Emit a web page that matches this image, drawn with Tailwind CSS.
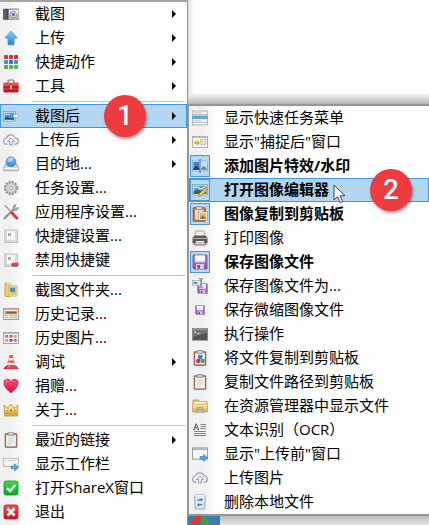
<!DOCTYPE html>
<html lang="zh-CN">
<head>
<meta charset="utf-8">
<meta name="viewport" content="width=device-width, initial-scale=1">
<title>ShareX</title>
<script src="https://cdn.jsdelivr.net/npm/@tailwindcss/browser@4"></script>
</head>
<body class="min-h-screen overflow-hidden bg-white font-['Open_Sans','Noto_Sans_CJK_SC',sans-serif] text-[15px] leading-6 text-black">
<svg class="absolute size-0" aria-hidden="true">
  <defs>
    <linearGradient id="gBlue" x2="0" y2="1"><stop stop-color="#8fd0f8"/><stop offset="1" stop-color="#2384d8"/></linearGradient>
    <linearGradient id="gGrey" x2="0" y2="1"><stop stop-color="#f4f4f4"/><stop offset="1" stop-color="#b4b4b8"/></linearGradient>
    <linearGradient id="gGold" x2="0" y2="1"><stop stop-color="#fbe9a6"/><stop offset="1" stop-color="#dfae4c"/></linearGradient>
    <linearGradient id="gRed" x2="0" y2="1"><stop stop-color="#ef5a5a"/><stop offset="1" stop-color="#c01420"/></linearGradient>
    <linearGradient id="gGreen" x2="0" y2="1"><stop stop-color="#3fdc50"/><stop offset="1" stop-color="#08a828"/></linearGradient>
    <linearGradient id="gPurple" x2="0" y2="1"><stop stop-color="#b684d4"/><stop offset="1" stop-color="#8a50b0"/></linearGradient>
    <linearGradient id="gHeart" x2="0" y2="1"><stop stop-color="#ff5478"/><stop offset="1" stop-color="#d00c3c"/></linearGradient>
    <symbol id="camera" viewBox="0 0 16 16"><rect y="2.5" width="16" height="11.5" rx="1" fill="#9c9ca0"/><rect x=".3" y="3" width="5" height="10.6" fill="#4a4a4c"/><path d="M1.5 4v9M3 4v9" stroke="#777" stroke-width=".6"/><path d="M6 4h9.5v9H6z" fill="url(#gGrey)"/><circle cx="10.3" cy="8.6" r="3.3" fill="#d8d8e4" stroke="#888892" stroke-width=".8"/><circle cx="10.3" cy="8.6" r="1.6" fill="#6a6aa0"/><path d="M13.7 5v2" stroke="#fff"/></symbol>
    <symbol id="up" viewBox="0 0 16 16"><path d="M8 1.2 14.2 8H11v6.8H5V8H1.8z" fill="url(#gBlue)" stroke="#3d94d8" stroke-width=".8"/></symbol>
    <symbol id="dots" viewBox="0 0 16 16"><g fill="#e02c38"><rect x="1" y="1" width="4" height="4" rx="1"/><rect x="6" y="1" width="4" height="4" rx="1"/><rect x="11" y="1" width="4" height="4" rx="1"/></g><g fill="#3c8fdc"><rect x="1" y="6" width="4" height="4" rx="1"/><rect x="11" y="6" width="4" height="4" rx="1"/></g><rect x="6" y="6" width="4" height="4" rx="1" fill="#2878cc"/><g fill="#48b838"><rect x="1" y="11" width="4" height="4" rx="1"/><rect x="6" y="11" width="4" height="4" rx="1"/><rect x="11" y="11" width="4" height="4" rx="1"/></g></symbol>
    <symbol id="tools" viewBox="0 0 16 16"><path d="M5 5V3.2Q5 2 6.2 2h3.6Q11 2 11 3.2V5" fill="none" stroke="#777" stroke-width="1.2"/><rect x=".3" y="4.5" width="15.4" height="9.7" rx="1" fill="url(#gRed)"/><path d="M.3 9h15.4" stroke="#8a0c14"/><rect x="7" y="7.6" width="2" height="3.2" fill="#ddd"/><path d="M1 13.8h14" stroke="#7c1016" stroke-width=".7"/></symbol>
    <symbol id="imgnext" viewBox="0 0 16 16"><rect x=".5" y="3.5" width="11.5" height="9.5" fill="#f4f8fc" stroke="#8298ac" stroke-width=".8"/><rect x="1.6" y="4.6" width="9.4" height="7.2" fill="#4b98dc"/><path d="M1.6 11.8V9.5l3-1 3 1.4 3.4-1v2.9z" fill="#285c84"/><path d="M2 6.3h5" stroke="#bfe2fa"/><path d="M10 6.7h2.5V4.8l3 3.2-3 3.2V9.4H10z" fill="#fafcff" stroke="#74889c" stroke-width=".6"/></symbol>
    <symbol id="cloud" viewBox="0 0 16 16"><path d="M4.5 12.2H3.8A3.1 3.1 0 0 1 3.4 6 4.6 4.6 0 0 1 12 5.8a3.2 3.2 0 0 1 .3 6.4h-.8" fill="#f3f3f7" stroke="#a2a2b2" stroke-width="1.2"/><path d="m8 6 3.4 3.5H9.3V13H6.7V9.5H4.6z" fill="#f6f6fa" stroke="#9494a6" stroke-width=".9"/></symbol>
    <symbol id="globe" viewBox="0 0 16 16"><path d="M2.5 8h11l2.2 4.5v2.2H.3v-2.2z" fill="#d8d8dc" stroke="#94949a" stroke-width=".7"/><circle cx="8" cy="5.8" r="5" fill="url(#gBlue)" stroke="#3578b4" stroke-width=".6"/><path d="M4.5 4q3-3 6-1.4L9 5.5 6 6z" fill="#c4e8fc" opacity=".7"/><path d="M1 12.4h14" stroke="#fff"/></symbol>
    <symbol id="gear" viewBox="0 0 16 16"><circle cx="8" cy="8" r="6.2" fill="none" stroke="#98989c" stroke-width="2" stroke-dasharray="2.2 1.05"/><circle cx="8" cy="8" r="5.4" fill="#c4c4c8" stroke="#98989c" stroke-width=".6"/><circle cx="8" cy="8" r="3.2" fill="none" stroke="#e8e8ea"/><circle cx="8" cy="8" r="1.6" fill="#fff" stroke="#888" stroke-width=".7"/></symbol>
    <symbol id="wrench" viewBox="0 0 16 16"><path d="M1.500 14.200 11 5" stroke="#909094" stroke-width="2.200" stroke-linecap="round"/><path d="M10 2.200a3.600 3.600 0 0 1 3-1.400L11.800 3l.9 1.300 2.800-.8a3.600 3.600 0 0 1-5 3z" fill="#b0b0b4" stroke="#808084" stroke-width=".6"/><path d="m1.200 1.300 1.300-.4 6 6.300-.8.9-6.200-6z" fill="#98989c"/><path d="m9 9 4.800 5" stroke="#e2343c" stroke-width="3" stroke-linecap="round"/></symbol>
    <symbol id="key" viewBox="0 0 16 16"><rect x="1" y="1.5" width="14" height="13.5" rx="1" fill="#bcbcc0"/><rect x="1.5" y="2" width="12.8" height="12" rx="1" fill="#dcdce0"/><rect x="3.5" y="3" width="9" height="9" rx="1" fill="#fbfbfb" stroke="#c8c8cc" stroke-width=".5"/><path d="M5.5 8V5.5h2V8M5.5 7h2" fill="none" stroke="#888" stroke-width=".8"/></symbol>
    <symbol id="keyoff" viewBox="0 0 16 16"><use href="#key"/><rect x="8.5" y="10.8" width="7" height="3.6" rx="1.4" fill="#d42834"/><path d="M9.8 12h4.4" stroke="#f08088" stroke-width=".7"/></symbol>
    <symbol id="folder" viewBox="0 0 16 16"><path d="M2 1.2h5.5v13H2z" fill="url(#gGold)" stroke="#c89c48" stroke-width=".6"/><path d="M5 4h9v10H5z" fill="#f8f2cc" stroke="#c49c4c" stroke-width=".7"/><rect x="7" y="5.5" width="5.5" height="7" fill="#5888c0"/><path d="M7 10h5.5v2.5H7z" fill="#e8cc54"/><path d="m2 1.2 4 3v11l-4-1.6z" fill="#f0ce78" stroke="#c89c48" stroke-width=".6"/></symbol>
    <symbol id="history" viewBox="0 0 16 16"><rect x=".5" y="2.5" width="15" height="11" fill="#ececee" stroke="#88888c" stroke-width=".8"/><path d="M1 3.4h14" stroke="#b8b8bc"/><rect x="2" y="5" width="12" height="3.3" fill="#d8882c"/><path d="M4 6.6h9" stroke="#8e4c10" stroke-width=".9"/><path d="M2 9.7h3M6.5 9.7H14M2 11.5h3M6.5 11.5H14" stroke="#b4b4b8" stroke-width=".9"/></symbol>
    <symbol id="gallery" viewBox="0 0 16 16"><rect x=".5" y="2.5" width="15" height="11" fill="#f4f4f6" stroke="#929296" stroke-width=".8"/><path d="M1 3.4h14" stroke="#b8b8bc"/><path d="M2.2 5h3v2.7h-3z" fill="#8888a8"/><path d="M6.5 5h3v2.7h-3z" fill="#b87450"/><path d="M10.8 5h3v2.7h-3z" fill="#dcaa54"/><path d="M2.2 9h3v2.7h-3z" fill="#d49c60"/><path d="M6.5 9h3v2.7h-3z" fill="#884c9c"/><path d="M10.8 9h3v2.7h-3z" fill="#b464bc"/></symbol>
    <symbol id="cone" viewBox="0 0 16 16"><path d="M2.6 12h10.8l2 3H.6z" fill="#d84448" stroke="#b83438" stroke-width=".5"/><path d="M6.5 1h3l3.3 12.5H3.2z" fill="#e44a4c"/><path d="m5.7 4 4.6 0 .7 2.5H5.1zM4.5 8.8h7l.6 2.3H3.9z" fill="#f3eeee"/><path d="M7.3 1.5 6 13" stroke="#fff" stroke-opacity=".35"/></symbol>
    <symbol id="heart" viewBox="0 0 16 16"><path d="M8 15Q.8 9.5.8 5.3a3.7 3.7 0 0 1 7.2-1.6 3.7 3.7 0 0 1 7.2 1.6Q15.200 9.500 8 15z" fill="url(#gHeart)" stroke="#c41844" stroke-width=".6"/><path d="M2.3 5q.2-2 2.2-2.2" fill="none" stroke="#ffb0c0"/></symbol>
    <symbol id="crown" viewBox="0 0 16 16"><path d="m1 3 3.600 3L8 2l3.400 4L15 3l-.6 11H1.600z" fill="url(#gGold)" stroke="#bd8c34" stroke-width=".8"/><path d="M2 11.600h12" stroke="#c2923c"/><circle cx="8" cy="8.500" r="1" fill="#c84838"/><circle cx="4.300" cy="9" r=".7" fill="#b4782c"/><circle cx="11.700" cy="9" r=".7" fill="#b4782c"/></symbol>
    <symbol id="clip" viewBox="0 0 16 16"><rect x="2" y="1.500" width="12" height="14" rx="1" fill="#b07858" stroke="#8c5c40" stroke-width=".6"/><rect x="3.200" y="3" width="9.600" height="11.300" fill="#f6f8f6"/><path d="M5 .6h6v3H5z" fill="#c4c4c0" stroke="#84847c" stroke-width=".6"/><path d="M4.800 6h6.400M4.800 8h6.400M4.800 10h6.400M4.800 12h4" stroke="#b4c0bc" stroke-width=".8"/></symbol>
    <symbol id="bar" viewBox="0 0 16 16"><rect x=".4" y="2.500" width="15.200" height="8" fill="#f4f4f6" stroke="#b0b0b4" stroke-width=".8"/><path d="M2 4.600h1.500M4.500 4.600h9" stroke="#cacace" stroke-width=".8"/><path d="M8 10h3.500V7.800l4.200 3.600-4.200 3.600v-2.200H8z" fill="#56ace8" stroke="#2e7cbc" stroke-width=".6"/></symbol>
    <symbol id="ok" viewBox="0 0 16 16"><rect x="1" y="1" width="14" height="14" rx="2" fill="url(#gGreen)" stroke="#0a9a28" stroke-width=".8"/><path d="m4 8 3 3 5.300-6" fill="none" stroke="#fff" stroke-width="2.300"/></symbol>
    <symbol id="exit" viewBox="0 0 16 16"><rect x="1" y="1" width="14" height="14" rx="2" fill="url(#gRed)" stroke="#a81820" stroke-width=".8"/><path d="m4.500 4.500 7 7m0-7-7 7" stroke="#fff" stroke-width="2.600"/></symbol>
    <symbol id="menu" viewBox="0 0 16 16"><rect x=".5" y="1" width="15" height="14" fill="#f4f4f6" stroke="#a8a8ac" stroke-width=".8"/><path d="M1 4.400h14M1 12.400h14" stroke="#bcbcc0"/><path d="M.5 5.500h15v3.500H.5z" fill="#58a8e0"/><path d="M2 2.700h8M2 10.700h8" stroke="#d0d0d4"/></symbol>
    <symbol id="afterwin" viewBox="0 0 16 16"><rect x=".5" y="2.500" width="15" height="11" fill="#f4f4f4" stroke="#a0a0a4" stroke-width=".8"/><path d="M1 3.500h14" stroke="#c0c0c4"/><rect x="2" y="6" width="5" height="5" fill="#f0e0a0"/><path d="M2.500 8h2.700V6.700L8 9l-2.800 2.300V10H2.500z" fill="#d8b020"/><rect x="8.500" y="5.500" width="5.500" height="5" fill="#e0e0e4" stroke="#b4b4b8" stroke-width=".6"/></symbol>
    <symbol id="effects" viewBox="0 0 16 16"><rect x=".5" y="3" width="15" height="10" fill="#f0f6fa" stroke="#7898b4" stroke-width=".7"/><rect x="1.400" y="4" width="6" height="8" fill="#3a80c8"/><path d="m1.400 10 3-2.500L7.400 10v2h-6z" fill="#1c4874"/><rect x="9" y="4" width="5.600" height="8" fill="#c4def2"/><path d="m9 10 3-2 2.600 2v2H9z" fill="#6890b0"/><path d="M8 1v14" stroke="#3470a8"/></symbol>
    <symbol id="edit" viewBox="0 0 16 16"><rect x=".5" y="2.500" width="15" height="10.500" fill="#f8fafc" stroke="#7890a4" stroke-width=".7"/><rect x="1.600" y="3.600" width="12.800" height="8.300" fill="#4a98dc"/><path d="M2 6q3-2 5 0t6-1" stroke="#cae8fa" stroke-width="1.500" fill="none"/><path d="M1.600 11.900V9.500L6 8l8.400 2v1.900z" fill="#356c48"/><path d="m6.500 14.500 1-3.200 5.700-5.500 2.200 2.200-5.700 5.500z" fill="#f0c048" stroke="#9c6c20" stroke-width=".6"/><path d="m13.200 5.800 1.300-1 1.500 1.500-.8 1.500z" fill="#e8888c"/></symbol>
    <symbol id="paste" viewBox="0 0 16 16"><rect x="1" y="1.500" width="12.500" height="14" rx="1" fill="#bd7440" stroke="#8c5028" stroke-width=".7"/><rect x="3" y="3.500" width="8.600" height="10" fill="#eedcc8"/><path d="M4.500.6h5.500v3H4.500z" fill="#d4d4d0" stroke="#84847c" stroke-width=".6"/><rect x="6.500" y="6" width="9" height="8" fill="#fff" stroke="#888c90" stroke-width=".6"/><rect x="7.700" y="7.200" width="6.600" height="5.600" fill="#e0b45c"/><path d="m7.700 12.800 2.800-3 3.800 3z" fill="#90643c"/></symbol>
    <symbol id="printer" viewBox="0 0 16 16"><path d="M4 1h8l1 6H3z" fill="#f0f0f2" stroke="#88888c" stroke-width=".7"/><path d="M2.500 5.500h11L15.500 8v5.500H.5V8z" fill="#56585a"/><path d="M1 8.500h14" stroke="#a8aaac"/><path d="M3.500 10.500h9l1 4.500h-11z" fill="#dcdcde" stroke="#48484a" stroke-width=".7"/><path d="M4 13h8" stroke="#aaa" stroke-width=".6"/></symbol>
    <symbol id="save" viewBox="0 0 16 16"><path d="M1 1h14v14H2l-1-1z" fill="url(#gPurple)" stroke="#7c48a0" stroke-width=".8"/><rect x="3" y="1.400" width="10" height="7" fill="#f6f2fa"/><path d="M3 7.800h10" stroke="#c8b4d8"/><rect x="4" y="10" width="8" height="5" fill="#d8ccde"/><rect x="5.500" y="11" width="2.400" height="3.600" fill="#74428c"/></symbol>
    <symbol id="saveas" viewBox="0 0 16 16"><use href="#save" x="5" y="5" width="11" height="11"/><rect x=".5" y="2.500" width="9" height="4.500" fill="#f4f8fc" stroke="#88a0b8" stroke-width=".7"/><path d="M1.500 4.800h4" stroke="#3878c0" stroke-width="1.600"/><path d="M7 .6q1.500 0 2 .8.500-.8 2-.8M9 1.400v7.200M7 9.400q1.500 0 2-.8.500.8 2 .8" fill="none" stroke="#505860" stroke-width=".9"/></symbol>
    <symbol id="savesmall" viewBox="0 0 16 16"><use href="#save" x="3" y="3" width="10" height="10"/></symbol>
    <symbol id="terminal" viewBox="0 0 16 16"><rect x=".4" y="2.400" width="15.200" height="11.800" fill="#505254" stroke="#848688" stroke-width=".8"/><path d="M.8 3h14.400v4L.8 11z" fill="#747678"/><path d="M1 3.200h14" stroke="#a0a2a4"/><path d="m2.300 5.200 1.600 1-1.600 1M5 7.600h2.500" fill="none" stroke="#f0f0f0" stroke-width=".8"/></symbol>
    <symbol id="clipblocks" viewBox="0 0 16 16"><rect x="2" y="1.500" width="12" height="14" rx="1" fill="#b86c58" stroke="#945040" stroke-width=".6"/><rect x="3.200" y="3" width="9.600" height="11.300" fill="#f8f8fa"/><path d="M5 .6h6v3H5z" fill="#ccccca" stroke="#84847c" stroke-width=".6"/><path d="m8 4.500 2.500 1v3L8 9.500l-2-1v-3z" fill="#3a7cdc"/><circle cx="6.300" cy="11" r="2.300" fill="#e03038"/><rect x="8.700" y="8.900" width="4" height="4.200" rx="1" fill="#34b044"/></symbol>
    <symbol id="explorer" viewBox="0 0 16 16"><path d="M1 2h5.500l1 1.500H15V13H1z" fill="#e8bc58" stroke="#bc903c" stroke-width=".7"/><path d="M2 3.800h12V7H2z" fill="#fbf6de"/><path d="M.5 6h15v8H.5z" fill="url(#gGold)" stroke="#c49c48" stroke-width=".6"/><path d="M4.500 15V11q0-1.500 1.500-1.500h4q1.500 0 1.500 1.500v4H10v-3.500H6V15z" fill="#b0bcc8" stroke="#84909c" stroke-width=".5"/></symbol>
    <symbol id="ocr" viewBox="0 0 16 16"><path d="m2 7.500 2.200-5.800L6.400 7.500M2.900 5.800h2.600M1.300 7.500h1.500M5.600 7.500h1.500" fill="none" stroke="#404244" stroke-width=".9"/><path d="M8.500 2.500H14M8.500 4.500H14M8.500 6.500H14M2 9.500h12M2 11.500h12M2 13.500h12" stroke="#74767a" stroke-width=".9"/></symbol>
    <symbol id="window" viewBox="0 0 16 16"><rect x=".4" y="1.900" width="15.200" height="11.200" fill="#fafafa" stroke="#86888c" stroke-width=".8"/><path d="M.8 3.200h14.400" stroke="#a8acb0" stroke-width="1.600"/><path d="M8 10.500h3.500V8.400l4.200 3.500-4.200 3.500v-2.200H8z" fill="#4ca8e8" stroke="#2e7cbc" stroke-width=".6"/></symbol>
    <symbol id="recycle" viewBox="0 0 16 16"><path d="M2.500 1h11l-.8 14H3.300z" fill="#dce8f8" stroke="#8098bc" stroke-width=".8"/><path d="M2.500 1.700h11" stroke="#f4f8fc" stroke-width="1.200"/><path d="M5 7q.6-2 3-2h1V3.800l2 1.900-2 1.900V6.400H8Q6.300 6.400 5 7zM11 9.500q-.6 2-3 2H7v1.200l-2-1.900 2-1.900v1.200h1q1.700 0 3-.6z" fill="#3c7ce0"/></symbol>
  </defs>
</svg>

<div class="flex min-h-screen items-start">
  <nav id="main" role="menu" aria-label="ShareX" class="z-10 w-[188px] shrink-0 self-stretch border-t-2 border-r border-t-[#a3a3a3] border-r-[#8f8f8f] bg-linear-to-r from-[#f1f1f1] from-[10px] to-[#fdfdfd] to-[24px]"></nav>
  <div class="flex min-h-screen min-w-0 grow flex-col bg-linear-to-r from-[#dedede] to-white to-[6px]">
    <div class="flex h-[104px] items-end"><div class="h-2.5 grow bg-linear-to-b from-[#f4f4f4] to-[#b5b5b5]"></div></div>
    <nav id="sub" role="menu" aria-label="截图后" class="border-y-2 border-l border-y-[#979797] border-l-[#9a9a9a] bg-linear-to-r from-[#f1f1f1] from-[14px] to-[#fdfdfd] to-[26px]"></nav>
    <div class="flex h-2.5 grow bg-linear-to-b from-[#bdbdbd] to-[#e9e9e9]">
      <div class="flex w-8 justify-center overflow-hidden bg-[#3a7cb0]">
        <svg class="mr-2 h-5 w-5 shrink-0" viewBox="0 0 20 20" aria-hidden="true"><circle cx="10" cy="10" r="10" fill="#2cab3c"/><path d="M10 10 1 5A10 10 0 0 1 12 .2z" fill="#e4352c"/><path d="M1 5 3 14 8 8z" fill="#e4352c"/><circle cx="10" cy="10" r="4" fill="#3a7cb0"/></svg>
      </div>
    </div>
  </div>
</div>

<script>
const mainItems = [
  ['camera', '截图', 'more'], ['up', '上传', 'more'], ['dots', '快捷动作', 'more'], ['tools', '工具', 'more'], null,
  ['imgnext', '截图后', 'more', 'active', '1'], ['cloud', '上传后', 'more'], ['globe', '目的地...', 'more'],
  ['gear', '任务设置...'], ['wrench', '应用程序设置...'], ['key', '快捷键设置...'], ['keyoff', '禁用快捷键'], null,
  ['folder', '截图文件夹...'], ['history', '历史记录...'], ['gallery', '历史图片...'], ['cone', '调试', 'more'],
  ['heart', '捐赠...'], ['crown', '关于...'], null,
  ['clip', '最近的链接', 'more'], ['bar', '显示工作栏'], ['ok', '打开ShareX窗口'], ['exit', '退出']
];
const subItems = [
  ['menu', '显示快速任务菜单'], ['afterwin', '显示"捕捉后"窗口'], ['effects', '添加图片特效/水印', 'checked'],
  ['edit', '打开图像编辑器', 'checked', 'active', '2'], ['paste', '图像复制到剪贴板', 'checked'], ['printer', '打印图像'],
  ['save', '保存图像文件', 'checked'], ['saveas', '保存图像文件为...'], ['savesmall', '保存微缩图像文件'], ['terminal', '执行操作'],
  ['clipblocks', '将文件复制到剪贴板'], ['clip', '复制文件路径到剪贴板'], ['explorer', '在资源管理器中显示文件'],
  ['ocr', '文本识别（OCR）'], ['window', '显示"上传前"窗口'], ['cloud', '上传图片'], ['recycle', '删除本地文件']
];
const arrow = '<svg class="mr-[11px] ml-auto h-2 w-1" viewBox="0 0 4 8" aria-hidden="true"><path d="M0 0l4 4-4 4z"/></svg>';
const cursor = '<svg class="absolute top-1.5 left-[144px] h-5 w-[13px]" viewBox="0 0 13 20" aria-hidden="true"><path d="M1 1v15l3.500-3.300 2.700 6 2.500-1.100L7 11.800h5z" fill="#fff" stroke="#444" stroke-width="1"/></svg>';
function row(item, isSub) {
  if (!item) return '<div role="separator" class="flex h-1.5 items-center pr-0.5 pl-8"><div class="h-px grow bg-[#c4c4c4]"></div></div>';
  const [icon, label, ...flags] = item;
  const has = f => flags.includes(f);
  const badge = flags.find(f => /^\d$/.test(f));
  const checked = has('checked');
  const role = checked ? 'role="menuitemcheckbox" aria-checked="true"' : 'role="menuitem"';
  const box = checked ? 'border border-[#4596dc] bg-[#b9d9f1]' : '';
  return `<button type="button" ${role} class="relative flex h-6 w-full items-center text-left ${has('active') ? 'bg-[#b5d6f1] outline outline-[#3e97e2] -outline-offset-1' : ''}">
    <span class="flex h-[22px] items-center justify-center ${isSub ? 'ml-px w-5' : 'w-[22px]'} ${box}"><svg class="size-4 shrink-0" aria-hidden="true"><use href="#${icon}"/></svg></span>
    <span class="pb-0.5 whitespace-nowrap ${isSub ? 'ml-3.5' : 'ml-[13px]'} ${checked ? 'font-bold' : ''}">${label}</span>
    ${has('more') ? arrow : ''}
    ${badge ? `<span class="absolute -top-[9px] ${isSub ? 'left-[181px]' : 'left-[104px]'} flex size-[42px] items-center justify-center rounded-full bg-[#ee3b3e] font-[Roboto,sans-serif] text-[28px] font-medium text-white shadow-[1px_2px_3px_#0006]">${badge}</span>` : ''}
    ${isSub && has('active') ? cursor : ''}
  </button>`;
}
document.getElementById('main').innerHTML = mainItems.map(i => row(i, false)).join('');
document.getElementById('sub').innerHTML = subItems.map(i => row(i, true)).join('');
</script>
</body>
</html>
